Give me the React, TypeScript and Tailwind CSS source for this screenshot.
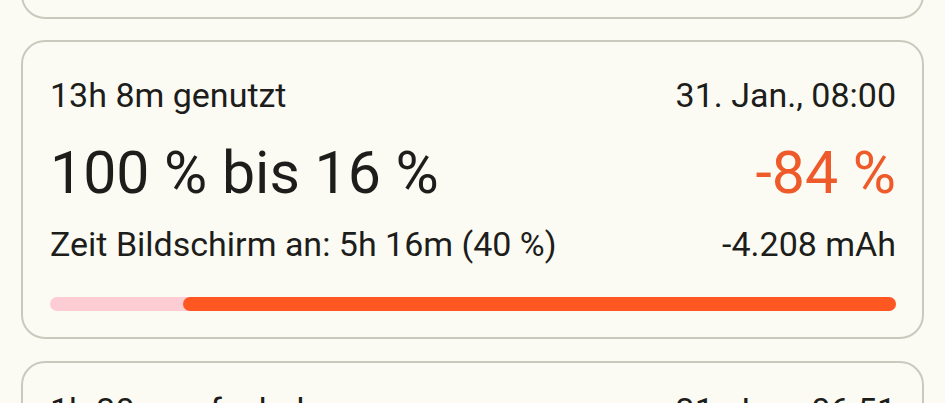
import React from "react";

type Session = {
  used: string;
  date: string;
  range: string;
  delta: string;
  screen: string;
  mah: string;
  start: number;
};

const session: Session = {
  used: "13h 8m genutzt",
  date: "31. Jan., 08:00",
  range: "100 % bis 16 %",
  delta: "-84 %",
  screen: "Zeit Bildschirm an: 5h 16m (40 %)",
  mah: "-4.208 mAh",
  start: 15.7,
};

const App = () => {
  return (
    <div
      className="w-[945px] h-[403px] overflow-hidden bg-[#fcfbf3] text-[#1d1d1b]"
      style={{ fontFamily: "Roboto, 'Noto Sans', sans-serif" }}
    >
      <div className="flex flex-col px-[21px] -mt-[41px]">
        {/* previous card, only its bottom edge shows */}
        <div className="h-[60px] rounded-[24px] border-2 border-[#c9c9bd]" />

        <div className="mt-[21px] rounded-[24px] border-2 border-[#c9c9bd] pl-[27px] pr-[26px] pt-[33px] pb-[26px]">
          <div className="flex justify-between items-baseline text-[34px] leading-[40px]">
            <span>{session.used}</span>
            <span>{session.date}</span>
          </div>
          <div className="flex justify-between items-baseline mt-[23px] text-[59px] leading-[70px]">
            <span>{session.range}</span>
            <span className="text-[#ee5a2a]">{session.delta}</span>
          </div>
          <div className="flex justify-between items-baseline mt-[16px] text-[34px] leading-[40px]">
            <span>{session.screen}</span>
            <span>{session.mah}</span>
          </div>
          <div className="relative mt-[33px] h-[14px] rounded-full bg-[#fdcdd3]">
            <div
              className="absolute top-0 bottom-0 right-0 rounded-full bg-[#ff5722]"
              style={{ left: `${session.start}%` }}
            />
          </div>
        </div>

        <div className="mt-[22px] h-[200px] rounded-[24px] border-2 border-[#c9c9bd] pl-[27px] pr-[26px] pt-[27px]">
          <div className="flex justify-between items-baseline text-[34px] leading-[40px]">
            <span>1h 30m aufgeladen</span>
            <span>31. Jan., 06:51</span>
          </div>
        </div>
      </div>
    </div>
  );
};

export default App;
